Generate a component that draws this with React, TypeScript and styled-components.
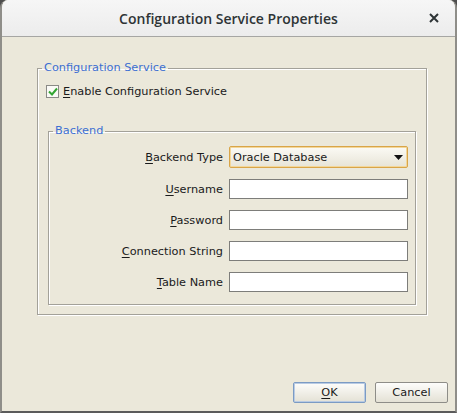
import React, { useState } from "react";
import styled, { createGlobalStyle } from "styled-components";

const GlobalStyle = createGlobalStyle`
  html, body {
    margin: 0;
    padding: 0;
    background: #4e4e4e;
  }
  body {
    font-family: "DejaVu Sans", "Liberation Sans", sans-serif;
  }
`;

const Window = styled.div`
  width: 457px;
  height: 413px;
  box-sizing: border-box;
  display: flex;
  flex-direction: column;
  border-radius: 8px 8px 0 0;
  border-left: 2px solid #8f8e89;
  border-right: 2px solid #8f8e89;
  border-bottom: 2px solid #5b5b5b;
  overflow: hidden;
  background: #ebe8da;
`;

const TitleBar = styled.div`
  height: 36px;
  flex: none;
  display: flex;
  align-items: center;
  justify-content: center;
  position: relative;
  background: linear-gradient(#f6f6f6, #ececec);
  border-bottom: 1px solid #a6a6a3;
`;

const Title = styled.div`
  font-family: "Open Sans", "DejaVu Sans", sans-serif;
  font-weight: 600;
  font-size: 14px;
  color: #2e3436;
`;

const CloseButton = styled.button`
  position: absolute;
  right: 12px;
  top: 9px;
  width: 18px;
  height: 18px;
  padding: 0;
  border: none;
  background: transparent;
  display: flex;
  align-items: center;
  justify-content: center;
`;

const Body = styled.div`
  flex: 1;
  display: flex;
  flex-direction: column;
  padding: 24px 28px 8px 35px;
`;

const Group = styled.fieldset<{ $inner?: boolean }>`
  margin: ${(p) => (p.$inner ? "0 0 0 10px" : "0")};
  padding: ${(p) => (p.$inner ? "8px 7px 12px 0" : "10px 10px 9px 0")};
  border: 1px solid #a3a199;
  box-shadow: inset 1px 1px 0 #ffffff, 1px 1px 0 #ffffff;
  min-width: 0;
`;

const Legend = styled.legend`
  padding: 0 2px;
  margin-left: 4px;
  font-size: 11.3px;
  color: #3d6fd2;
  line-height: 14px;
`;

const CheckRow = styled.label`
  display: flex;
  align-items: center;
  gap: 4px;
  margin: 0 0 26px 8px;
  font-size: 11.3px;
  color: #1a1a1a;
  cursor: default;
`;

const Box = styled.span`
  width: 11px;
  height: 11px;
  border: 1px solid #8a8a86;
  background: #fafaf6;
  display: flex;
  align-items: center;
  justify-content: center;
`;

const Form = styled.div`
  display: grid;
  grid-template-columns: 1fr 179px;
  column-gap: 6px;
  row-gap: 11px;
  align-items: center;
`;

const Label = styled.label`
  text-align: right;
  font-size: 11.3px;
  color: #1a1a1a;
`;

const Mn = styled.span`
  text-decoration: underline;
  text-underline-offset: 2px;
`;

const Field = styled.input`
  box-sizing: border-box;
  width: 179px;
  height: 20px;
  margin: 0;
  border: 1px solid #7d7d7a;
  background: #ffffff;
  font: 11.3px "DejaVu Sans", sans-serif;
  outline: none;
`;

const Combo = styled.div`
  box-sizing: border-box;
  width: 179px;
  height: 22px;
  display: flex;
  align-items: center;
  justify-content: space-between;
  padding: 0 4px 0 3px;
  border: 1px solid #d9a548;
  border-radius: 2px;
  box-shadow: inset 0 0 0 1px #f3d79a;
  background: linear-gradient(#fbfaf5, #e7e4d7);
  font-size: 11.3px;
  color: #1a1a1a;
`;

const Spacer = styled.div`
  flex: 1;
`;

const Buttons = styled.div`
  display: flex;
  justify-content: flex-end;
  gap: 9px;
  margin-right: -21px;
`;

const Button = styled.button<{ $default?: boolean }>`
  width: 73px;
  height: 21px;
  padding: 0;
  border-radius: 2px;
  border: 1px solid ${(p) => (p.$default ? "#7b9bc4" : "#8e8d88")};
  box-shadow: ${(p) => (p.$default ? "inset 0 0 0 1px #b9cbe3" : "none")};
  background: linear-gradient(#fdfdfb, #e4e1d5);
  font: 11.3px "DejaVu Sans", sans-serif;
  color: #1a1a1a;
`;

const rows = [
  { m: "U", rest: "sername" },
  { m: "P", rest: "assword" },
  { m: "C", rest: "onnection String" },
  { m: "T", rest: "able Name" },
];

export default function App() {
  const [enabled, setEnabled] = useState(true);
  return (
    <>
      <GlobalStyle />
      <Window>
        <TitleBar>
          <Title>Configuration Service Properties</Title>
          <CloseButton>
            <svg width="10" height="10" viewBox="0 0 10 10">
              <path d="M1 1 L9 9 M9 1 L1 9" stroke="#2e3436" strokeWidth="2" />
            </svg>
          </CloseButton>
        </TitleBar>
        <Body>
          <Group>
            <Legend>Configuration Service</Legend>
            <CheckRow onClick={() => setEnabled(!enabled)}>
              <Box>
                {enabled && (
                  <svg width="10" height="9" viewBox="0 0 10 9">
                    <path d="M1 4.5 L4 7.5 L9 1.5" stroke="#33a532" strokeWidth="2" fill="none" />
                  </svg>
                )}
              </Box>
              <span>
                <Mn>E</Mn>nable Configuration Service
              </span>
            </CheckRow>
            <Group $inner>
              <Legend>Backend</Legend>
              <Form>
                <Label>
                  <Mn>B</Mn>ackend Type
                </Label>
                <Combo>
                  <span>Oracle Database</span>
                  <svg width="9" height="5" viewBox="0 0 9 5">
                    <path d="M0 0 L9 0 L4.5 5 Z" fill="#111" />
                  </svg>
                </Combo>
                {rows.map((r) => (
                  <React.Fragment key={r.m}>
                    <Label>
                      <Mn>{r.m}</Mn>
                      {r.rest}
                    </Label>
                    <Field type={r.m === "P" ? "password" : "text"} />
                  </React.Fragment>
                ))}
              </Form>
            </Group>
          </Group>
          <Spacer />
          <Buttons>
            <Button $default>
              <Mn>O</Mn>K
            </Button>
            <Button>Cancel</Button>
          </Buttons>
        </Body>
      </Window>
    </>
  );
}
